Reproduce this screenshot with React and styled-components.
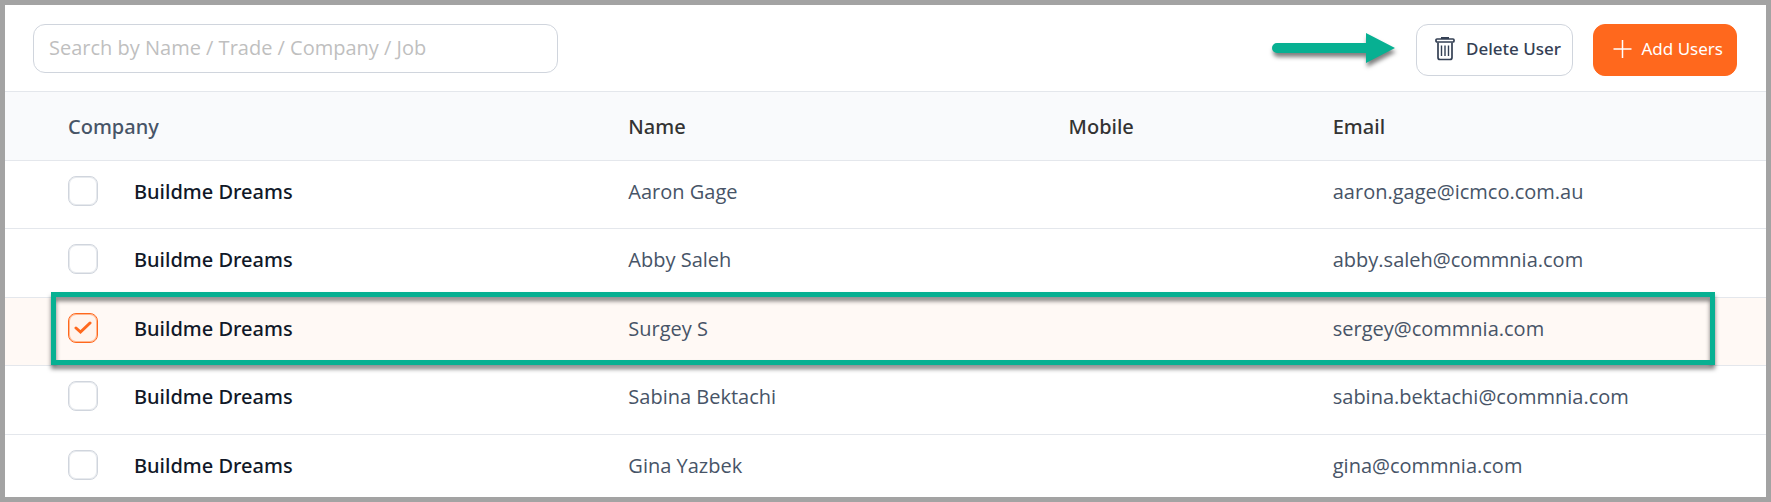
import React, { useState } from "react";
import styled, { createGlobalStyle, css } from "styled-components";

const GlobalStyle = createGlobalStyle`
  *, *::before, *::after { box-sizing: border-box; }
  body {
    margin: 0;
    background: #fff;
    font-family: "Segoe UI", "Open Sans", "Noto Sans", sans-serif;
  }
`;

const Frame = styled.div`
  display: flex;
  flex-direction: column;
  height: 100vh;
  border: 5px solid #a3a3a3;
  background: #fff;
`;

const Toolbar = styled.header`
  display: flex;
  flex: none;
  align-items: flex-start;
  justify-content: space-between;
  gap: 24px;
  padding: 19px 29px 15px 28px;
  border-bottom: 1px solid #e4e7ec;
`;

const SearchInput = styled.input`
  flex: 0 1 525px;
  min-width: 160px;
  height: 49px;
  padding: 0 15px 2px;
  border: 1px solid #d0d5dd;
  border-radius: 12px;
  background: #fff;
  color: #475467;
  font: 400 20px/28px "Segoe UI", "Open Sans", "Noto Sans", sans-serif;
  &::placeholder { color: #bfbfbf; opacity: 1; }
`;

const Actions = styled.div`
  display: flex;
  flex: none;
  align-items: center;
  gap: 20px;
`;

const Arrow = styled.svg`
  display: block;
  margin-bottom: 4px;
  overflow: visible;
  filter: drop-shadow(1px 4px 2px rgba(0, 0, 0, 0.5));
`;

const Button = styled.button`
  display: flex;
  align-items: center;
  justify-content: space-between;
  width: ${(p) => (p.$primary ? 144 : 157)}px;
  height: 52px;
  padding: 0 ${(p) => (p.$primary ? 13 : 11)}px 2px 18px;
  border: 1px solid ${(p) => (p.$primary ? "#ff681d" : "#d0d5dd")};
  border-radius: 12px;
  background: ${(p) => (p.$primary ? "#ff681d" : "#fff")};
  color: ${(p) => (p.$primary ? "#fff" : "#344054")};
  font: ${(p) => (p.$primary ? 400 : 500)} 17px/24px "Segoe UI", "Noto Sans", sans-serif;
  white-space: nowrap;
  cursor: pointer;
  svg { flex: none; }
`;

const TableArea = styled.main`
  flex: 1;
  min-height: 0;
  overflow-y: auto;
  scrollbar-width: none;
`;

const Table = styled.table`
  width: 100%;
  table-layout: fixed;
  border-collapse: separate;
  border-spacing: 0;
  font-size: 20px;
  line-height: 28px;
  text-align: left;
`;

const HeadCell = styled.th`
  width: ${(p) => p.$width};
  height: 69px;
  padding: 2px 0 0 ${(p) => (p.$first ? 63 : 7)}px;
  border-bottom: 1px solid #e4e7ec;
  background: #f9fafc;
  color: ${(p) => (p.$first ? "#475467" : "#333")};
  font-family: "Segoe UI", "Noto Sans", sans-serif;
  font-weight: 500;
`;

const Cell = styled.td`
  height: 68px;
  padding: 0 0 6px ${(p) => (p.$first ? 63 : 7)}px;
  border-bottom: 1px solid #e4e7ec;
  color: #475467;
`;

const Row = styled.tr`
  position: relative;
  &:nth-child(even) ${Cell} { height: 69px; }
  ${(p) => p.$selected && css`background: #fff9f5;`}
`;

const CompanyLabel = styled.label`
  display: flex;
  align-items: center;
  gap: 36px;
  color: #101828;
  font-family: "Segoe UI", "Noto Sans", sans-serif;
  font-weight: 500;
  cursor: pointer;
`;

const CheckWrap = styled.span`
  display: grid;
  width: 30px;
  height: 30px;
  margin-bottom: 2px;
  > * { grid-area: 1 / 1; }
  svg { place-self: center; pointer-events: none; }
`;

const Checkbox = styled.input`
  appearance: none;
  width: 30px;
  height: 30px;
  margin: 0;
  border: 1px solid #d0d5dd;
  border-radius: 8px;
  background: #fff;
  box-shadow: inset 0 0 0 1px #e7eaee;
  &:checked {
    border-color: #ff681d;
    background: #fff4ed;
    box-shadow: inset 0 0 0 1px #ffb78f;
  }
`;

const Highlight = styled.span`
  position: absolute;
  inset: -6px 51px 1px 46px;
  border: 5px solid #07b092;
  filter: drop-shadow(0 4px 2px rgba(0, 0, 0, 0.5));
  pointer-events: none;
`;

const TrashIcon = () => (
  <svg width="20" height="24" viewBox="0 0 20 24" fill="none" stroke="currentColor" aria-hidden="true">
    <path d="M7 2V1h6v1" strokeWidth="2" />
    <rect x="1" y="2" width="18" height="3" rx="1" strokeWidth="1.7" />
    <path d="M3 5.5V20.500a2 2 0 0 0 2 2H15a2 2 0 0 0 2-2V5.500" strokeWidth="1.7" />
    <path d="M6.500 8.500V19M10 8.500V19M13.500 8.500V19" strokeWidth="1.400" />
  </svg>
);

const PlusIcon = () => (
  <svg width="20" height="18" viewBox="0 0 20 18" stroke="currentColor" strokeWidth="1.500" aria-hidden="true">
    <path d="M10.500 0V18M1.500 9H19.500" />
  </svg>
);

const CheckIcon = () => (
  <svg width="18" height="14" viewBox="0 0 18 14" fill="none" stroke="#ff681d" strokeWidth="3" strokeLinecap="round" strokeLinejoin="miter" aria-hidden="true">
    <path d="M2 7L6.500 11L16 2" />
  </svg>
);

const USERS = [
  { company: "Buildme Dreams", name: "Aaron Gage", email: "aaron.gage@icmco.com.au" },
  { company: "Buildme Dreams", name: "Abby Saleh", email: "abby.saleh@commnia.com" },
  { company: "Buildme Dreams", name: "Surgey S", email: "sergey@commnia.com" },
  { company: "Buildme Dreams", name: "Sabina Bektachi", email: "sabina.bektachi@commnia.com" },
  { company: "Buildme Dreams", name: "Gina Yazbek", email: "gina@commnia.com" },
];

export default function App() {
  const [selected, setSelected] = useState(2);
  return (
    <>
      <GlobalStyle />
      <Frame>
        <Toolbar>
          <SearchInput
            type="text"
            aria-label="Search users"
            placeholder="Search by Name / Trade / Company / Job"
          />
          <Actions>
            <Arrow width="124" height="30" viewBox="0 0 124 30" aria-hidden="true">
              <path d="M5 10H94V0L123 15L94 30V20H5A5 5 0 0 1 5 10Z" fill="#07b092" />
            </Arrow>
            <Button type="button"><TrashIcon />Delete User</Button>
            <Button type="button" $primary><PlusIcon />Add Users</Button>
          </Actions>
        </Toolbar>
        <TableArea>
          <Table>
            <thead>
              <tr>
                <HeadCell scope="col" $first $width="35%">Company</HeadCell>
                <HeadCell scope="col" $width="25%">Name</HeadCell>
                <HeadCell scope="col" $width="15%">Mobile</HeadCell>
                <HeadCell scope="col" $width="25%">Email</HeadCell>
              </tr>
            </thead>
            <tbody>
              {USERS.map((user, i) => (
                <Row key={user.email} $selected={i === selected}>
                  <Cell $first>
                    <CompanyLabel>
                      <CheckWrap>
                        <Checkbox
                          type="checkbox"
                          checked={i === selected}
                          onChange={() => setSelected(i === selected ? -1 : i)}
                        />
                        {i === selected && <CheckIcon />}
                      </CheckWrap>
                      {user.company}
                    </CompanyLabel>
                    {i === selected && <Highlight />}
                  </Cell>
                  <Cell>{user.name}</Cell>
                  <Cell />
                  <Cell>{user.email}</Cell>
                </Row>
              ))}
            </tbody>
          </Table>
        </TableArea>
      </Frame>
    </>
  );
}
